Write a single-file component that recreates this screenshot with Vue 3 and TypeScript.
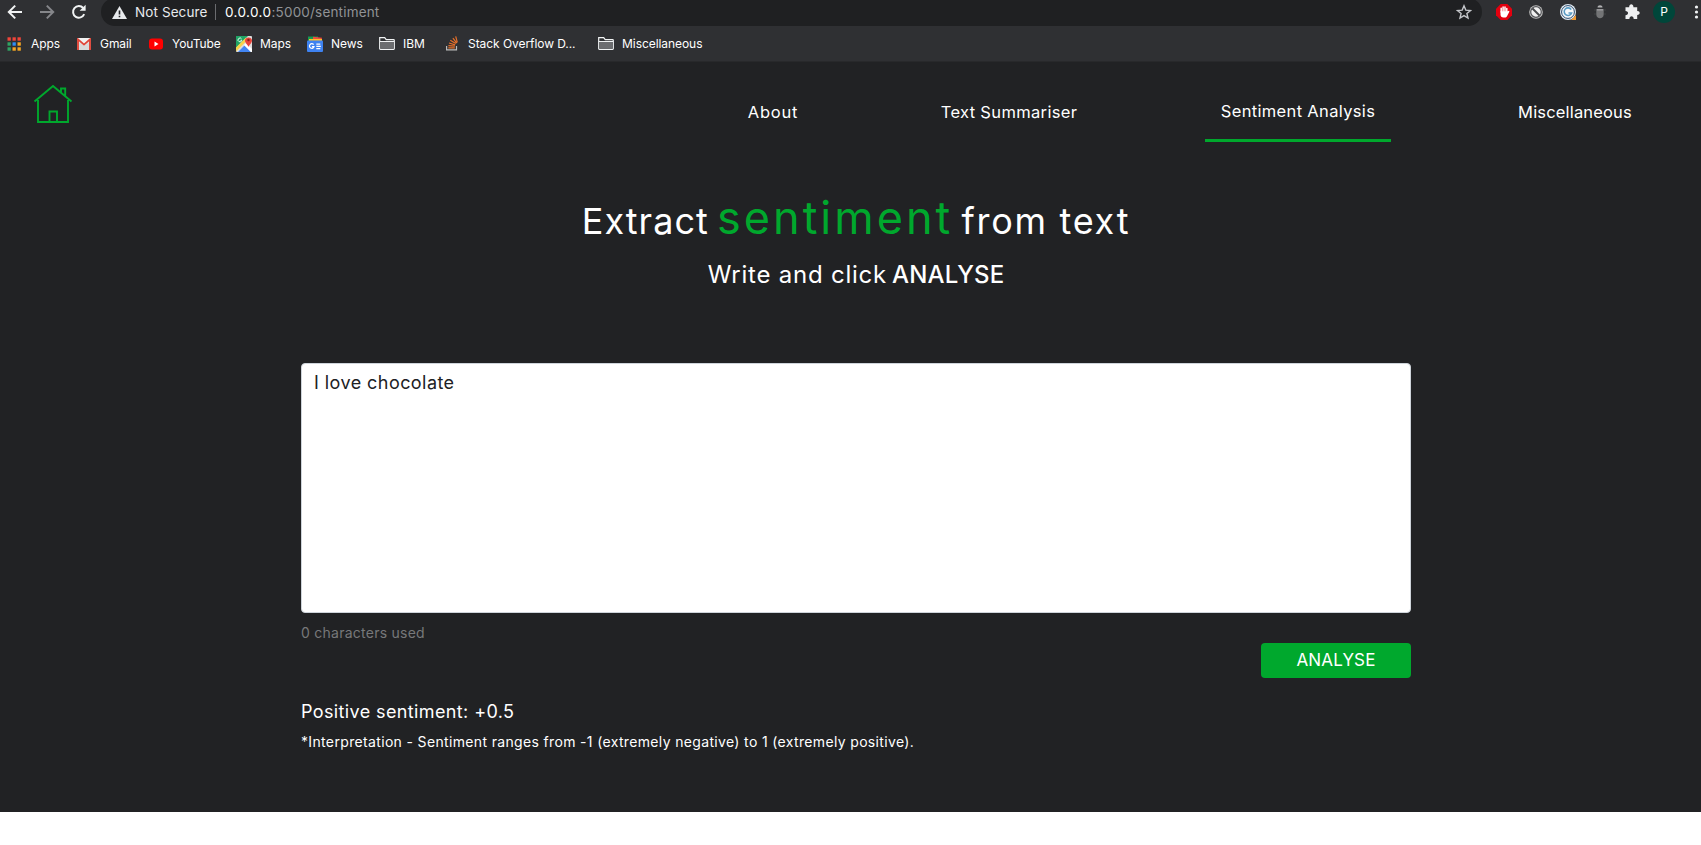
<script setup lang="ts">
import { ref } from 'vue'

interface Bookmark {
  label: string
  icon: 'apps' | 'gmail' | 'youtube' | 'maps' | 'news' | 'folder' | 'stack'
}

const bookmarks: Bookmark[] = [
  { label: 'Apps', icon: 'apps' },
  { label: 'Gmail', icon: 'gmail' },
  { label: 'YouTube', icon: 'youtube' },
  { label: 'Maps', icon: 'maps' },
  { label: 'News', icon: 'news' },
  { label: 'IBM', icon: 'folder' },
  { label: 'Stack Overflow D...', icon: 'stack' },
  { label: 'Miscellaneous', icon: 'folder' },
]

const appColors: string[] = ['#f0453a', '#f0453a', '#f0453a', '#2fa463', '#2f8df5', '#f5a623', '#2fa463', '#f5a623', '#f5a623']

const links = [
  { label: 'About', key: 'about' },
  { label: 'Text Summariser', key: 'summary' },
  { label: 'Sentiment Analysis', key: 'sentiment' },
  { label: 'Miscellaneous', key: 'misc' },
]
const current = ref('sentiment')
const text = ref('I love chocolate')
</script>

<template>
  <div class="window">
    <div class="toolbar">
      <div class="controls">
        <svg class="ctl" viewBox="0 0 16 16"><path d="M15 8H2M8.2 1.6 1.8 8l6.4 6.4" /></svg>
        <svg class="ctl dim" viewBox="0 0 16 16"><path d="M1 8h13M7.8 1.6 14.2 8l-6.4 6.4" /></svg>
        <svg class="ctl" viewBox="0 0 16 16"><path d="M13.2 10.2A5.8 5.8 0 1 1 12.2 4" /><path class="solid" d="M14.6.8v6H8.6z" /></svg>
      </div>
      <div class="address">
        <svg class="warn" viewBox="0 0 15 13"><path d="M7.5 0 15 13H0z" fill="#e8eaed" /><path d="M7.5 4.6v4M7.5 9.7v1.6" stroke="#202124" stroke-width="1.6" /></svg>
        <span class="secure">Not Secure</span>
        <span class="divider"></span>
        <span class="url"><b>0.0.0.0</b>:5000/sentiment</span>
        <svg class="star" viewBox="0 0 16 16"><path d="m8 1.8 1.8 4.3 4.7.4-3.6 3 1.1 4.6L8 11.6l-4 2.5 1.1-4.6-3.6-3 4.7-.4z" /></svg>
      </div>
      <div class="extensions">
        <svg viewBox="0 0 16 16"><path d="M4.7 0h6.6L16 4.7v6.6L11.3 16H4.7L0 11.3V4.7z" fill="#e3000f" /><path d="M5.2 8V4.2M7.1 7.6V2.9M9 7.6V3.1M10.8 8V4.4" stroke="#fff" stroke-width="1.5" stroke-linecap="round" /><path d="M4.5 7.2h7l1-.3c.7-.2 1.1.5.7 1l-2.2 4.4c-.4.9-1.2 1.2-2.2 1.2H7.5c-1.8 0-3-1.2-3-3z" fill="#fff" /></svg>
        <svg viewBox="0 0 16 16"><circle cx="8" cy="8" r="6.8" fill="#c4c4c4" /><circle cx="8" cy="8" r="5.3" fill="#f2f2f2" stroke="#55565a" stroke-width="1.2" /><path d="m4.5 4.5 7 7" stroke="#4b4c4f" stroke-width="2" /></svg>
        <svg viewBox="0 0 16 16"><circle cx="8" cy="8" r="8" fill="#dfe8f0" /><circle cx="8" cy="8" r="6.4" fill="#f7f9fb" stroke="#29496d" stroke-width="1" /><path d="M11.2 5.6A3.8 3.8 0 1 0 11.6 9H8.5" fill="none" stroke="#5b9cc4" stroke-width="1.6" /><path d="M16 11v5h-5z" fill="#f09a32" /></svg>
        <svg viewBox="0 0 16 16"><path d="M5.5 3.6C5.5.4 10.5.4 10.5 3.6z" fill="#b2b2b4" /><path d="M4.3 5h7.4v5.5c0 5-7.4 5-7.4 0z" fill="#737476" /><path d="M2 6h2M2 10h2M12 6h2M12 10h2" stroke="#414245" /><path d="M5 5h6v1.6H5z" fill="#96969a" /></svg>
        <svg viewBox="0 0 16 16"><path d="M1.5 3.3h3.7C4.8-.7 9.8-.7 9.4 3.3h3.8V7c3.3-.2 3.3 4 0 3.9V15H9.7c0-3.7-4.3-3.7-4.3 0H1.5v-3.8c3.4 0 3.4-4.2 0-4.2z" fill="#eeeff1" /></svg>
        <span class="avatar">P</span>
        <svg viewBox="0 0 16 16" fill="#f1f3f4"><circle cx="8.5" cy="3" r="1.6" /><circle cx="8.5" cy="8" r="1.6" /><circle cx="8.5" cy="13" r="1.6" /></svg>
      </div>
    </div>

    <div class="bookmarks">
      <div v-for="b in bookmarks" :key="b.label" class="bookmark">
        <span class="bicon">
          <svg v-if="b.icon === 'apps'" width="14" height="14" viewBox="0 0 14 14"><rect v-for="(c, i) in appColors" :key="i" :x="(i % 3) * 5 + 0.5" :y="Math.floor(i / 3) * 5 + 0.3" width="3.3" height="3.4" :fill="c" /></svg>
          <svg v-else-if="b.icon === 'gmail'" width="16" height="12" viewBox="0 0 16 12"><rect x="1" width="14" height="12" rx="1" fill="#f1f1f1" /><path d="M3 12V4l5 4 5-4v8z" fill="#d9d9d9" /><path d="M2 12V1.4l6 5.2 6-5.2V12" fill="none" stroke="#df4437" stroke-width="1.9" /></svg>
          <svg v-else-if="b.icon === 'youtube'" width="16" height="12" viewBox="0 0 16 12"><rect x="1" y=".5" width="14" height="11" rx="3" fill="#f00" /><path d="m6.5 3.6 4 2.4-4 2.4z" fill="#fff" /></svg>
          <svg v-else-if="b.icon === 'maps'" width="16" height="16" viewBox="0 0 16 16"><rect width="16" height="16" rx="1" fill="#dcdcdc" /><path d="M0 0h12L0 12z" fill="#21a365" /><path d="M2 16 8.5 9.5 15 16z" fill="#4285f4" /><path d="M0 11.5 10 1.5v4L0 15.5z" fill="#f9d34b" /><path d="m8 9 2-2 6 6v3h-1z" fill="#fff" /><path d="M12.5 11C12 8.5 9 7.5 9 4.2a3.6 3.6 0 0 1 7 0c0 3.3-3 4.3-3.5 6.8" fill="#e8453c" /><circle cx="12.5" cy="4" r="1.2" fill="#8e1d18" /><path d="M5.6 3a1.9 1.9 0 1 0 .2 1.4H4.5" fill="none" stroke="#fff" stroke-width=".9" /></svg>
          <svg v-else-if="b.icon === 'news'" width="16" height="16" viewBox="0 0 16 16"><path d="M1 .5h10v5H1z" fill="#149b52" /><path d="m6 .8 9 1-1 4H6z" fill="#ef4a3e" /><path d="M2 3h13v4H2z" fill="#fbc02d" /><rect y="4.5" width="16" height="11.5" rx="1" fill="#3e82f1" /><path d="M6.6 8.6a2.3 2.3 0 1 0 .4 2H4.9M9.3 8.2h4M9.3 10.4h4.5M9.3 12.6h4" fill="none" stroke="#fff" stroke-width="1.2" /></svg>
          <svg v-else-if="b.icon === 'stack'" class="so" width="12" height="15" viewBox="0 0 12 15"><path d="M.6 10v3.8h9.9V10" fill="none" stroke="#bcbbbb" stroke-width="1.2" /><path d="M2.3 11.8h6.5M2.4 9.6l6.4.6M3 7l6.2 1.8M4.3 4.3l5.5 3.3M6.9 2.2l3.9 5M9.7.3l1.6 6" fill="none" stroke="#e8702a" stroke-width="1.2" /></svg>
          <svg v-else width="16" height="13" viewBox="0 0 16 13"><path d="M.7 11.5V.7h5l1.5 2h7.4q.7 0 .7.7v8.2q0 .7-.7.7H1.4q-.7 0-.7-.7z" fill="#2f3033" stroke="#f1f3f4" stroke-width="1.2" /><path d="M1.3 5h13.4v6.7H1.3z" fill="#6c6d70" /><path d="M1 4.5h14" stroke="#f1f3f4" /></svg>
        </span>
        <span>{{ b.label }}</span>
      </div>
    </div>

    <div class="page">
      <header>
        <svg class="home" viewBox="0 0 40 40"><path d="M1.5 17.5 20 2l18.5 15.5M5 16v22h30V16M16.5 38V27.5H24V38M28 8V4.5h4.2v7" /></svg>
        <nav>
          <a v-for="l in links" :key="l.key" :class="[l.key, { active: l.key === current }]" @click="current = l.key">{{ l.label }}</a>
        </nav>
      </header>
      <main>
        <h1>Extract <em>sentiment</em> <span>from text</span></h1>
        <h2>Write and click <b>ANALYSE</b></h2>
        <textarea v-model="text" spellcheck="false"></textarea>
        <div class="actions">
          <span class="count">0 characters used</span>
          <button type="button">ANALYSE</button>
        </div>
        <p class="result">Positive sentiment: +0.5</p>
        <p class="note">*Interpretation - Sentiment ranges from -1 (extremely negative) to 1 (extremely positive).</p>
      </main>
    </div>
  </div>
</template>

<style>
body {
  background: #fff;
  overflow: hidden;
}
</style>

<style scoped>
.window {
  width: 1701px;
  height: 845px;
  overflow: hidden;
  font-family: Inter, "Liberation Sans", sans-serif;
  color: #fff;
}
svg { display: block; }
.toolbar {
  height: 26px;
  display: flex;
  background: #2f3033;
  overflow: hidden;
}
.controls {
  display: flex;
  width: 101px;
  height: 24px;
  padding-left: 7px;
  box-sizing: border-box;
  gap: 16px;
  align-items: center;
  flex: none;
}
.ctl {
  width: 16px;
  height: 16px;
  flex: none;
  fill: none;
  stroke: #f1f3f4;
  stroke-width: 2;
}
.ctl .solid { fill: #f1f3f4; stroke: none; }
.dim { stroke: #85868a; }
.address {
  display: flex;
  align-items: center;
  width: 1381px;
  height: 28px;
  margin-top: -2px;
  padding: 0 10px 0 11px;
  box-sizing: border-box;
  border-radius: 14px;
  background: #1f2022;
  font-size: 13.5px;
  line-height: 24px;
  flex: none;
}
.warn { width: 15px; height: 13px; margin-right: 8px; }
.secure { width: 80px; white-space: nowrap; color: #e8eaed; letter-spacing: 0.1px; }
.divider { width: 1px; height: 16px; background: #6b6c6f; margin-right: 9px; }
.url { color: #919396; white-space: nowrap; letter-spacing: 0.18px; }
.url b { font-weight: 400; color: #fff; letter-spacing: 0.4px; }
.star {
  width: 16px;
  height: 16px;
  margin-left: auto;
  fill: none;
  stroke: #c4c6ca;
  stroke-width: 1.4;
}
.extensions {
  display: grid;
  grid-template-columns: repeat(7, 32px);
  height: 24px;
  margin-left: 6px;
  place-items: center;
  flex: none;
}
.extensions svg { width: 16px; height: 16px; }
.avatar {
  width: 22px;
  height: 22px;
  border-radius: 50%;
  background: #00463a;
  font-size: 12px;
  line-height: 22px;
  text-align: center;
}
.bookmarks {
  display: grid;
  grid-template-columns: 69px 72px 88px 71px 72px 65px 154px auto;
  height: 36px;
  padding-left: 7px;
  background: #2f3033;
  box-sizing: border-box;
  border-bottom: 1px solid #28292b;
  font-size: 12px;
  letter-spacing: -0.06px;
  align-items: center;
  white-space: nowrap;
}
.bookmark { display: flex; align-items: center; height: 16px; }
.bicon { width: 24px; flex: none; }
.so { margin-left: 2px; }
.page { height: 750px; background: #212224; }
header {
  height: 90px;
  display: flex;
  justify-content: space-between;
  padding: 0 55px 0 33px;
}
.home {
  width: 40px;
  height: 40px;
  margin-top: 22px;
  fill: none;
  stroke: #00a82d;
  stroke-width: 1.9;
}
nav { display: flex; gap: 113px; padding-top: 38px; }
nav a {
  height: 42px;
  box-sizing: border-box;
  font-size: 16.5px;
  line-height: 25px;
  letter-spacing: 0.34px;
  text-align: center;
  white-space: nowrap;
}
.about { width: 80px; letter-spacing: 0.8px; }
.summary { width: 166px; }
.sentiment { width: 186px; }
.misc { width: 142px; letter-spacing: 0.17px; }
nav a.active { line-height: 23px; border-bottom: 3px solid #00a82d; }
main { width: 1110px; margin: 0 auto 0 301px; padding-top: 39px; }
h1, h2, p { margin: 0; font-weight: 400; }
h1 {
  height: 66px;
  font-size: 36px;
  line-height: 54px;
  letter-spacing: 1px;
  word-spacing: -2.8px;
  text-align: center;
}
h1 em { font-style: normal; font-size: 45px; letter-spacing: 3px; color: #00a82d; }
h1 span { letter-spacing: 1.7px; word-spacing: 0; }
h2 {
  height: 106px;
  font-size: 24px;
  line-height: 36px;
  letter-spacing: 0.78px;
  text-align: center;
}
h2 b { font-weight: 500; letter-spacing: 0.15px; margin-left: -2.5px; }
textarea {
  display: block;
  width: 1110px;
  height: 250px;
  box-sizing: border-box;
  resize: none;
  padding: 6px 12px;
  border: 1px solid #ced4da;
  border-radius: 4px;
  font: 18px/26px Inter, sans-serif;
  letter-spacing: 0.44px;
  color: #202124;
  background: #fff;
  outline: none;
}
.actions { display: flex; justify-content: space-between; height: 87px; }
.count {
  margin-top: 9px;
  font-size: 14px;
  line-height: 22px;
  letter-spacing: 0.25px;
  color: #77787a;
}
button {
  width: 150px;
  height: 35px;
  margin-top: 30px;
  padding: 0;
  border: 0;
  border-radius: 4px;
  background: #00a82d;
  color: #fff;
  font: 17px/35px Inter, sans-serif;
  letter-spacing: 0.15px;
}
.result { font-size: 18px; line-height: 24px; height: 31px; letter-spacing: 0.38px; }
.note { font-size: 14px; line-height: 22px; letter-spacing: 0.345px; }
</style>
